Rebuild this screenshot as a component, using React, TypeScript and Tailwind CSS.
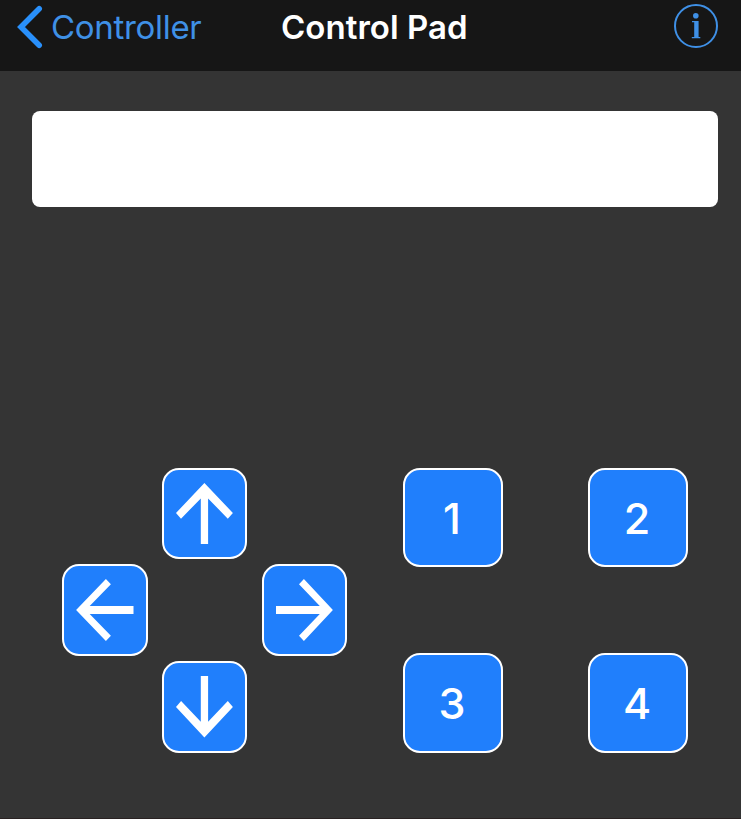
import type { ReactNode } from "react";

const arrows = {
  up: "M42.4 15 L70.9 45 L65.8 50.7 L46.1 30.4 V76 H38.8 V30.4 L19 50.7 L14 45 Z",
  left: "M14.1 46 L43.9 15 L48.9 20.2 L27.7 42.1 H71.5 V49.9 H27.7 L48.9 71.8 L43.9 77 Z",
  right: "M70.9 46 L41.9 15 L37 20.2 L57.8 42.1 H14 V49.9 H57.8 L37 71.8 L41.9 77 Z",
  down: "M42.4 76.6 L70.9 46 L65.8 40.1 L46.1 60.8 V15 H38.8 V60.8 L19.1 40.1 L14 46 Z",
};

function PadButton({ label, className, children }: { label: string; className: string; children: ReactNode }) {
  return (
    <button
      aria-label={label}
      className={`flex shrink-0 items-center border-2 border-white bg-[#207ffc] text-white ${className}`}
    >
      {children}
    </button>
  );
}

function ArrowButton({ direction, className }: { direction: keyof typeof arrows; className: string }) {
  return (
    <PadButton label={direction} className={`justify-start rounded-[17px] ${className}`}>
      <svg viewBox="0 0 85 92" className="-m-0.5 h-[92px] w-[85px] shrink-0 self-start" fill="currentColor">
        <path d={arrows[direction]} />
      </svg>
    </PadButton>
  );
}

function NumberButton({ value, className }: { value: number; className: string }) {
  return (
    <PadButton
      label={String(value)}
      className={`w-[100px] justify-center rounded-[17px] pr-[2px] pt-px text-[43px] leading-none font-medium ${className}`}
    >
      <span>{value}</span>
    </PadButton>
  );
}

export default function App() {
  return (
    <div className="flex h-[819px] w-[741px] flex-col overflow-hidden bg-[#343434] font-['Inter',sans-serif]">
      <header className="grid h-[71px] shrink-0 grid-cols-[281px_1fr_67px] items-start bg-[#161616]">
        <a className="flex pl-[16px] text-[#3f90e6]">
          <svg viewBox="0 0 28 54" className="h-[54px] w-7" fill="none">
            <path d="M23.2 8.8 L5 27 L23.2 45.2" stroke="#2990fb" strokeWidth="5.6" strokeLinecap="round" />
          </svg>
          <span className="ml-[7px] text-[33px] leading-[54px] tracking-[-0.3px]">Controller</span>
        </a>
        <h1 className="text-[33px] leading-[54px] font-semibold tracking-[0.05px] whitespace-nowrap text-white">
          Control Pad
        </h1>
        <svg viewBox="0 0 44 44" className="mt-1 h-11 w-11" fill="none">
          <circle cx="22" cy="22" r="21" stroke="#3f90e6" strokeWidth="2" />
          <circle cx="21.8" cy="11.7" r="2.8" fill="#3f90e6" />
          <path d="M18 17 H24.6 V33 H26.3 V34.2 H17.8 V33 H20.2 V18.2 H18 Z" fill="#3f90e6" />
        </svg>
      </header>
      <main className="flex flex-1 flex-col pt-10">
        <div className="ml-8 h-24 w-[686px] shrink-0 rounded-lg bg-white" />
        <div className="mt-[261px] ml-[62px] flex">
          <div className="flex w-[285px] flex-col items-center gap-[5px]">
            <ArrowButton direction="up" className="h-[91px] w-[85px]" />
            <div className="flex w-full justify-between">
              <ArrowButton direction="left" className="h-[92px] w-[86px]" />
              <ArrowButton direction="right" className="h-[92px] w-[85px]" />
            </div>
            <ArrowButton direction="down" className="h-[92px] w-[85px]" />
          </div>
          <div className="ml-[56px] grid grid-cols-2 gap-x-[85px] gap-y-[86px]">
            <NumberButton value={1} className="h-[99px]" />
            <NumberButton value={2} className="h-[99px]" />
            <NumberButton value={3} className="h-[100px]" />
            <NumberButton value={4} className="h-[100px]" />
          </div>
        </div>
      </main>
      <div className="h-px shrink-0 bg-[#292222]" />
    </div>
  );
}
